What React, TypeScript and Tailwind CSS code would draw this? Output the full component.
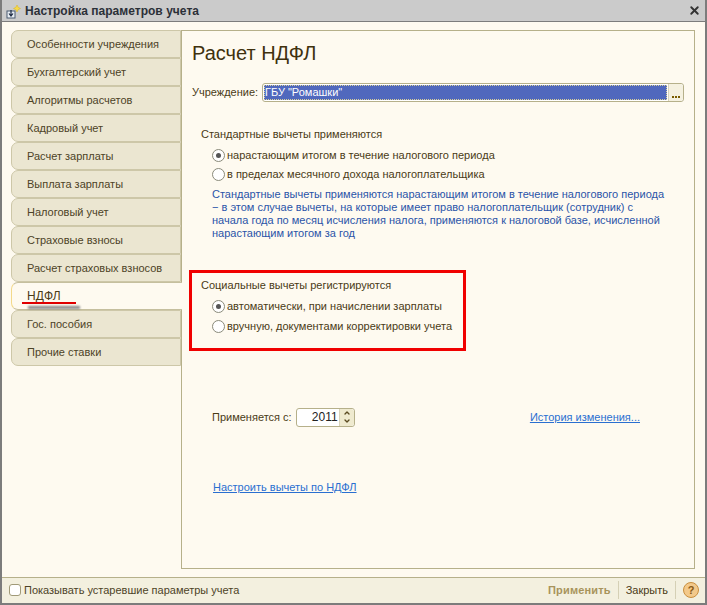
import { ChevronDown, ChevronUp, X } from 'lucide-react';

const tabs = [
  'Особенности учреждения',
  'Бухгалтерский учет',
  'Алгоритмы расчетов',
  'Кадровый учет',
  'Расчет зарплаты',
  'Выплата зарплаты',
  'Налоговый учет',
  'Страховые взносы',
  'Расчет страховых взносов',
  'НДФЛ',
  'Гос. пособия',
  'Прочие ставки',
];

function Radio({ checked, tall, label }: { checked?: boolean; tall?: boolean; label: string }) {
  return (
    <div className={tall ? 'flex items-center h-[20px]' : 'flex items-center h-[19px]'}>
      <span className="w-[13px] h-[13px] rounded-full border border-[#8a8a7a] bg-white flex items-center justify-center mr-[2px] shrink-0">
        {checked && <span className="w-[5px] h-[5px] rounded-full bg-[#555]" />}
      </span>
      <span>{label}</span>
    </div>
  );
}

export default function App() {
  return (
    <div
      className="relative w-[707px] h-[605px] bg-[#fefaf0] border-2 border-[#7c7c7c] border-t-0 flex flex-col text-[11px] text-[#4a3b16] overflow-hidden"
      style={{ fontFamily: '"Liberation Sans", Arial, sans-serif' }}
    >
      {/* заголовок окна */}
      <div className="h-[22px] bg-[#cbcbcb] border-b border-[#7c7c7c] flex items-center shrink-0 pl-[3px] pr-[4px]">
        <svg width="18" height="18" viewBox="0 0 18 18" className="shrink-0">
          <rect x="2" y="9" width="8" height="7" fill="#e8eef4" stroke="#4a5a70" />
          <path d="M6 8v6M4 11.500l2 2.500 2-2.500" stroke="#1c2a44" strokeWidth="1.2" fill="none" />
          <path d="M12 3l1.200 2.300L15.500 6.500l-2.300 1.200L12 10l-1.200-2.300L8.500 6.500l2.300-1.200z" fill="#f5d94a" stroke="#d8b020" strokeWidth="0.5" />
        </svg>
        <span className="ml-[2px] text-[12px] font-bold text-[#2b3038] tracking-[0.03px]">Настройка параметров учета</span>
        <X size={13} strokeWidth={3.5} className="ml-auto text-[#333]" />
      </div>

      <div className="flex-1 flex min-h-0 pt-[8px] pl-[9px] pr-[10px] pb-[8px]">
        {/* вкладки */}
        <div className="w-[170px] shrink-0 flex flex-col">
          {tabs.map((tab) => {
            const active = tab === 'НДФЛ';
            return (
              <div
                key={tab}
                className={
                  active
                    ? 'h-[28px] shrink-0 flex items-center pl-[15px] rounded-l-[7px] border border-r-0 border-[#c5bf9e] border-l-[#f3d98a] bg-[#fefaf0] text-[12px] tracking-[0.2px] relative z-10 -mr-px'
                    : 'h-[28px] shrink-0 flex items-center pl-[15px] rounded-l-[7px] border border-[#cdc7a8] bg-[#ebe6d1] text-[#4d4327]'
                }
              >
                {tab}
              </div>
            );
          })}
        </div>

        {/* панель */}
        <div className="flex-1 border border-[#b6b08a] pl-[10px] flex flex-col min-w-0">
          <h1 className="mt-[9px] h-[26px] text-[20px] leading-[26px] text-[#40310e]">Расчет НДФЛ</h1>

          <div className="mt-[17px] flex items-center h-[18px] pr-[10px]">
            <span className="w-[70px] shrink-0">Учреждение:</span>
            <div className="flex-1 h-[19px] flex border border-[#b6b08a] rounded-[3px] bg-white">
              <div className="flex-1 m-px bg-[#5068bd] border border-dotted border-[#d8cf9a] text-white leading-[13px]">
                ГБУ "Ромашки"
              </div>
              <div className="w-[15px] bg-[#f5f1e0] border-l border-[#d8d3ba] flex items-end justify-center pb-[3px] rounded-r-[3px]">
                <span className="flex gap-[1px]">
                  <i className="w-[2px] h-[2px] bg-[#7a5c00]" />
                  <i className="w-[2px] h-[2px] bg-[#7a5c00]" />
                  <i className="w-[2px] h-[2px] bg-[#7a5c00]" />
                </span>
              </div>
            </div>
          </div>

          <div className="mt-[25px] pl-[9px]">
            <div className="h-[16px] leading-[16px]">Стандартные вычеты применяются</div>
            <div className="mt-[4px] pl-[11px]">
              <Radio checked label="нарастающим итогом в течение налогового периода" />
              <Radio label="в пределах месячного дохода налогоплательщика" />
            </div>
            <p className="pl-[11px] w-[470px] leading-[13px] text-[#2a54a8] mt-[4px]">
              Стандартные вычеты применяются нарастающим итогом в течение налогового периода − в этом случае вычеты, на которые имеет право налогоплательщик (сотрудник) с начала года по месяц исчисления налога, применяются к налоговой базе, исчисленной нарастающим итогом за год
            </p>

            <div className="mt-[37px] h-[16px] leading-[16px]">Социальные вычеты регистрируются</div>
            <div className="mt-[3px] pl-[11px]">
              <Radio checked tall label="автоматически, при начислении зарплаты" />
              <Radio tall label="вручную, документами корректировки учета" />
            </div>
          </div>

          <div className="mt-[71px] ml-[20px] mr-[54px] flex items-center h-[20px]">
            <span>Применяется с:</span>
            <div className="ml-[4px] w-[59px] h-[19px] flex border border-[#b6b08a] rounded-[3px] bg-white">
              <span className="flex-1 text-right pr-[1px] leading-[17px] text-[12px] text-[#222]">2011</span>
              <span className="w-[15px] bg-[#efeacf] border-l border-[#d8d3ba] flex flex-col items-center justify-center rounded-r-[3px] text-[#5a4a20]">
                <ChevronUp size={8} strokeWidth={4} />
                <ChevronDown size={8} strokeWidth={4} />
              </span>
            </div>
            <a className="ml-auto text-[#2a6fd0] underline">История изменения...</a>
          </div>

          <a className="mt-[52px] ml-[21px] text-[#2a6fd0] underline">Настроить вычеты по НДФЛ</a>
        </div>
      </div>

      {/* нижняя панель */}
      <div className="h-[26px] shrink-0 bg-[#f3f0df] border-t border-[#b6b08a] flex items-center pl-[7px] pr-[6px] pb-[1px]">
        <span className="w-[12px] h-[12px] rounded-[3px] border border-[#a09a78] bg-white mr-[3px]" />
        <span className="text-[#4d4327]">Показывать устаревшие параметры учета</span>
        <span className="ml-auto font-bold text-[#a8945c] tracking-[0.15px]">Применить</span>
        <span className="w-px h-[18px] bg-[#d5d0b5] mx-[7px]" />
        <span className="text-[#4a3b16]">Закрыть</span>
        <span className="w-px h-[18px] bg-[#d5d0b5] mx-[7px]" />
        <span className="w-[16px] h-[16px] rounded-full bg-[#f3c98a] border border-[#c98f3e] text-[#8a5a14] text-[11px] font-bold flex items-center justify-center">?</span>
      </div>

      {/* пометки поверх скриншота */}
      <div className="absolute z-20 left-[187px] top-[270px] w-[277px] h-[81px] border-[3px] border-[#f00000] pointer-events-none" />
      <div className="absolute z-20 left-[20px] top-[302px] w-[54px] h-[2px] bg-[#e00000] pointer-events-none" />
      <div className="absolute z-20 left-[26px] top-[306px] w-[52px] h-[3px] bg-[#888] blur-[1px] pointer-events-none" />
    </div>
  );
}
